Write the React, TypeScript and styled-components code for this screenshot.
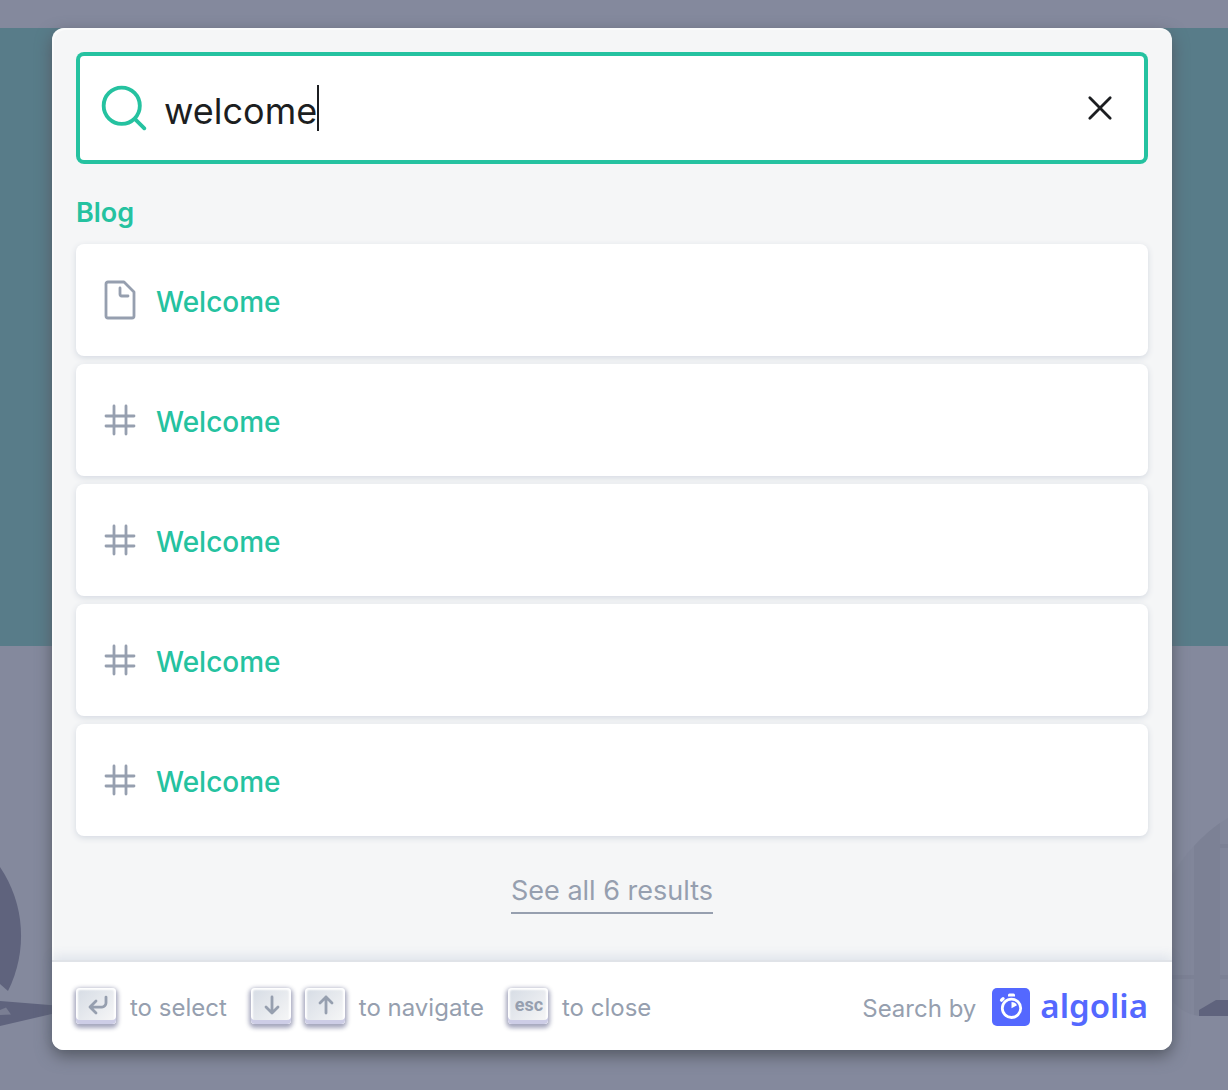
import React, { useState } from "react";
import styled, { createGlobalStyle } from "styled-components";

const GlobalStyle = createGlobalStyle`
  *, *::before, *::after { box-sizing: border-box; }
  body {
    margin: 0;
    font-family: Inter, "Liberation Sans", sans-serif;
    background: #84899d;
  }
`;

const colors = {
  primary: "#25c2a0",
  muted: "#969faf",
  text: "#1c1e21",
  surface: "#f5f6f7",
  logo: "#5468ff",
};

const Page = styled.div`
  display: grid;
  min-height: 100vh;
  overflow: hidden;
`;

const Backdrop = styled.div`
  grid-area: 1 / 1;
  display: flex;
  flex-direction: column;
`;

const NavStrip = styled.div`
  height: 28px;
  background: #84899d;
`;

const Hero = styled.div`
  height: 618px;
  background: #587c89;
`;

const Features = styled.div`
  flex: 1;
  display: flex;
  justify-content: space-between;
  align-items: flex-start;
  padding-top: 154px;
`;

const Overlay = styled.div`
  grid-area: 1 / 1;
  z-index: 1;
  padding: 28px 56px 40px 52px;
`;

const Modal = styled.div`
  max-width: 1120px;
  margin: 0 auto;
  border-radius: 12px;
  background: ${colors.surface};
  box-shadow: inset 2px 2px 0 0 rgba(255, 255, 255, 0.5), 0 6px 16px 0 #555a64;
`;

const Content = styled.div`
  padding: 24px 24px 48px;
`;

const SearchForm = styled.form`
  display: flex;
  align-items: center;
  height: 112px;
  padding: 0 24px;
  border-radius: 8px;
  background: #fff;
  box-shadow: inset 0 0 0 4px ${colors.primary};
`;

const SearchLabel = styled.label`
  flex: 1;
  min-width: 0;
  display: flex;
  align-items: center;
  color: ${colors.primary};
  cursor: text;
`;

const SearchInput = styled.input`
  field-sizing: content;
  min-width: 2px;
  max-width: 100%;
  height: 56px;
  margin: 0 0 0 16px;
  padding: 6px 0 0;
  border: 0;
  outline: 0;
  background: transparent;
  color: ${colors.text};
  caret-color: transparent;
  font: 400 36px/48px Inter, "Liberation Sans", sans-serif;
`;

const Caret = styled.span`
  width: 2px;
  height: 46px;
  background: ${colors.text};
`;

const ClearButton = styled.button`
  display: flex;
  padding: 4px;
  border: 0;
  border-radius: 50%;
  background: none;
  color: ${colors.text};
  cursor: pointer;
`;

const GroupTitle = styled.h2`
  margin: 32px 0 0;
  padding-bottom: 14px;
  color: ${colors.primary};
  font-size: 27px;
  font-weight: 600;
  line-height: 34px;
`;

const Hits = styled.ul`
  display: flex;
  flex-direction: column;
  gap: 8px;
  margin: 0;
  padding: 0;
  list-style: none;
`;

const HitLink = styled.a`
  display: flex;
  align-items: center;
  gap: 16px;
  height: 112px;
  padding: 0 24px;
  border-radius: 8px;
  background: #fff;
  box-shadow: 0 2px 6px 0 #d4d9e1;
  color: ${colors.muted};
  text-decoration: none;
`;

const HitTitle = styled.span`
  padding-top: 4px;
  color: ${colors.primary};
  font-size: 28px;
  font-weight: 500;
  line-height: 36px;
`;

const More = styled.div`
  display: flex;
  justify-content: center;
  padding-top: 36px;
`;

const MoreLink = styled.a`
  padding-bottom: 2px;
  border-bottom: 2px solid ${colors.muted};
  color: ${colors.muted};
  font-size: 27px;
  line-height: 38px;
  text-decoration: none;
`;

const Footer = styled.footer`
  display: flex;
  align-items: center;
  justify-content: space-between;
  height: 88px;
  padding: 0 24px;
  border-radius: 0 0 12px 12px;
  background: #fff;
  box-shadow: 0 -2px 0 0 #e0e3e8, 0 -6px 12px 0 rgba(69, 98, 155, 0.12);
  color: ${colors.muted};
  font-size: 24px;
  line-height: 32px;
`;

const Commands = styled.ul`
  display: flex;
  gap: 24px;
  margin: 0;
  padding: 0;
  list-style: none;
`;

const Command = styled.li`
  display: flex;
  align-items: center;
`;

const Key = styled.kbd`
  display: flex;
  align-items: center;
  justify-content: center;
  width: 40px;
  height: 36px;
  margin-right: 14px;
  padding: 0 0 2px 2px;
  border-radius: 4px;
  background: linear-gradient(-225deg, #d5dbe4, #f8f8f8);
  box-shadow: inset 0 -4px 0 0 #cdcde6, inset 0 0 2px 2px #fff,
    0 2px 4px 2px rgba(30, 35, 90, 0.4);
  color: ${colors.muted};
  font: 700 18px/32px Roboto, "Liberation Sans", sans-serif;
`;

const FooterText = styled.span`
  padding-top: 4px;
`;

const LogoLink = styled.a`
  display: flex;
  align-items: center;
  padding-top: 2px;
  color: ${colors.muted};
  text-decoration: none;
`;

const LogoMark = styled.svg`
  margin: 0 10px 0 16px;
`;

const Wordmark = styled.span`
  padding-bottom: 2px;
  color: ${colors.logo};
  font: 600 33px/38px "Noto Sans", "Open Sans", sans-serif;
`;

type IconProps = { size: number; box: number; stroke: number; d: string };

const Icon = ({ size, box, stroke, d }: IconProps) => (
  <svg
    width={size}
    height={size}
    viewBox={`0 0 ${box} ${box}`}
    fill="none"
    stroke="currentColor"
    strokeWidth={stroke}
    strokeLinecap="round"
    strokeLinejoin="round"
    aria-hidden="true"
  >
    <path d={d} />
  </svg>
);

const paths = {
  search:
    "M14.386 14.386l4.0877 4.0877-4.0877-4.0877c-2.9418 2.9419-7.7115 2.9419-10.6533 0-2.9419-2.9418-2.9419-7.7115 0-10.6533 2.9418-2.9419 7.7115-2.9419 10.6533 0 2.9419 2.9418 2.9419 7.7115 0 10.6533z",
  clear: "M10 10l5.09-5.09L10 10l5.09 5.09L10 10zm0 0L4.91 4.91 10 10l-5.09 5.09L10 10z",
  page: "M17 6v12c0 .52-.2 1-1 1H4c-.7 0-1-.33-1-1V2c0-.55.42-1 1-1h8l5 5zM14 8h-3.13c-.51 0-.87-.34-.87-.87V4",
  hash: "M13 13h4-4V8H7v5h6v4-4H7V8H3h4V3v5h6V3v5h4-4v5zm-6 0v4-4H3h4z",
  enter: "M12 3.53088v3c0 1-1 2-2 2H4M7 11.53088l-3-3 3-3",
  down: "M7.5 3.5v8M10.5 8.5l-3 3-3-3",
  up: "M7.5 11.5v-8M10.5 6.5l-3-3-3 3",
};

const KeyIcon = ({ d }: { d: string }) => <Icon size={30} box={15} stroke={1.4} d={d} />;

const hits: { id: number; kind: "page" | "hash"; title: string }[] = [
  { id: 1, kind: "page", title: "Welcome" },
  { id: 2, kind: "hash", title: "Welcome" },
  { id: 3, kind: "hash", title: "Welcome" },
  { id: 4, kind: "hash", title: "Welcome" },
  { id: 5, kind: "hash", title: "Welcome" },
];

const LeftArt = () => (
  <svg width="56" height="250" viewBox="0 800 56 250" aria-hidden="true">
    <path d="M0 867A123 123 0 0 1 8 991L0 984z" fill="#5f637d" />
    <path d="M0 1001L56 1005.500V1013L0 1026z" fill="#5f637d" />
    <path d="M0 1010L6 1007.500L11 1014.500L0 1015z" fill="#7a7e93" />
  </svg>
);

const RightArt = () => (
  <svg width="60" height="250" viewBox="1168 800 60 250" aria-hidden="true">
    <path
      d="M1168 882Q1182 858 1194 846Q1210 829 1228 818V1016H1200Q1180 1014 1168 995z"
      fill="#81869a"
    />
    <path d="M1194 846Q1207 832 1220 823V1016H1200L1194 1015z" fill="#7c8195" />
    <path d="M1220 844h8v4h-8zM1168 975h60v4h-60z" fill="#7c8195" />
    <path d="M1199 1010L1216 1000H1228V1016H1199z" fill="#5f637d" />
  </svg>
);

export default function App() {
  const [query, setQuery] = useState("welcome");
  return (
    <>
      <GlobalStyle />
      <Page>
        <Backdrop>
          <NavStrip />
          <Hero />
          <Features>
            <LeftArt />
            <RightArt />
          </Features>
        </Backdrop>
        <Overlay>
          <Modal role="dialog" aria-label="Search">
            <Content>
              <SearchForm onSubmit={(e) => e.preventDefault()}>
                <SearchLabel htmlFor="docsearch-input">
                  <Icon size={48} box={20} stroke={1.6} d={paths.search} />
                  <SearchInput
                    id="docsearch-input"
                    aria-label="Search"
                    autoComplete="off"
                    value={query}
                    onChange={(e) => setQuery(e.target.value)}
                  />
                  <Caret />
                </SearchLabel>
                <ClearButton type="button" aria-label="Clear the query" onClick={() => setQuery("")}>
                  <Icon size={40} box={20} stroke={1.4} d={paths.clear} />
                </ClearButton>
              </SearchForm>
              <GroupTitle>Blog</GroupTitle>
              <Hits>
                {hits.map((hit) => (
                  <li key={hit.id}>
                    <HitLink href="#">
                      <Icon size={40} box={20} stroke={1.4} d={paths[hit.kind]} />
                      <HitTitle>{hit.title}</HitTitle>
                    </HitLink>
                  </li>
                ))}
              </Hits>
              <More>
                <MoreLink href="#">See all 6 results</MoreLink>
              </More>
            </Content>
            <Footer>
              <Commands>
                <Command>
                  <Key><KeyIcon d={paths.enter} /></Key>
                  <FooterText>to select</FooterText>
                </Command>
                <Command>
                  <Key><KeyIcon d={paths.down} /></Key>
                  <Key><KeyIcon d={paths.up} /></Key>
                  <FooterText>to navigate</FooterText>
                </Command>
                <Command>
                  <Key>esc</Key>
                  <FooterText>to close</FooterText>
                </Command>
              </Commands>
              <LogoLink href="#">
                <FooterText>Search by</FooterText>
                <LogoMark width="38" height="38" viewBox="0 0 38 38" aria-hidden="true">
                  <rect width="38" height="38" rx="5" fill={colors.logo} />
                  <circle cx="19.500" cy="20.300" r="9.200" fill="none" stroke="#fff" strokeWidth="2.800" />
                  <path d="M16 8.500V7a1.500 1.500 0 0 1 1.500-1.500h4A1.500 1.500 0 0 1 23 7v1.500z" fill="#fff" />
                  <path d="M9.500 12.200l1.600-1.600" stroke="#fff" strokeWidth="3.200" strokeLinecap="round" />
                  <path d="M19.500 20.300V14A6.300 6.300 0 0 1 25 17.200z" fill="#fff" />
                </LogoMark>
                <Wordmark>algolia</Wordmark>
              </LogoLink>
            </Footer>
          </Modal>
        </Overlay>
      </Page>
    </>
  );
}
